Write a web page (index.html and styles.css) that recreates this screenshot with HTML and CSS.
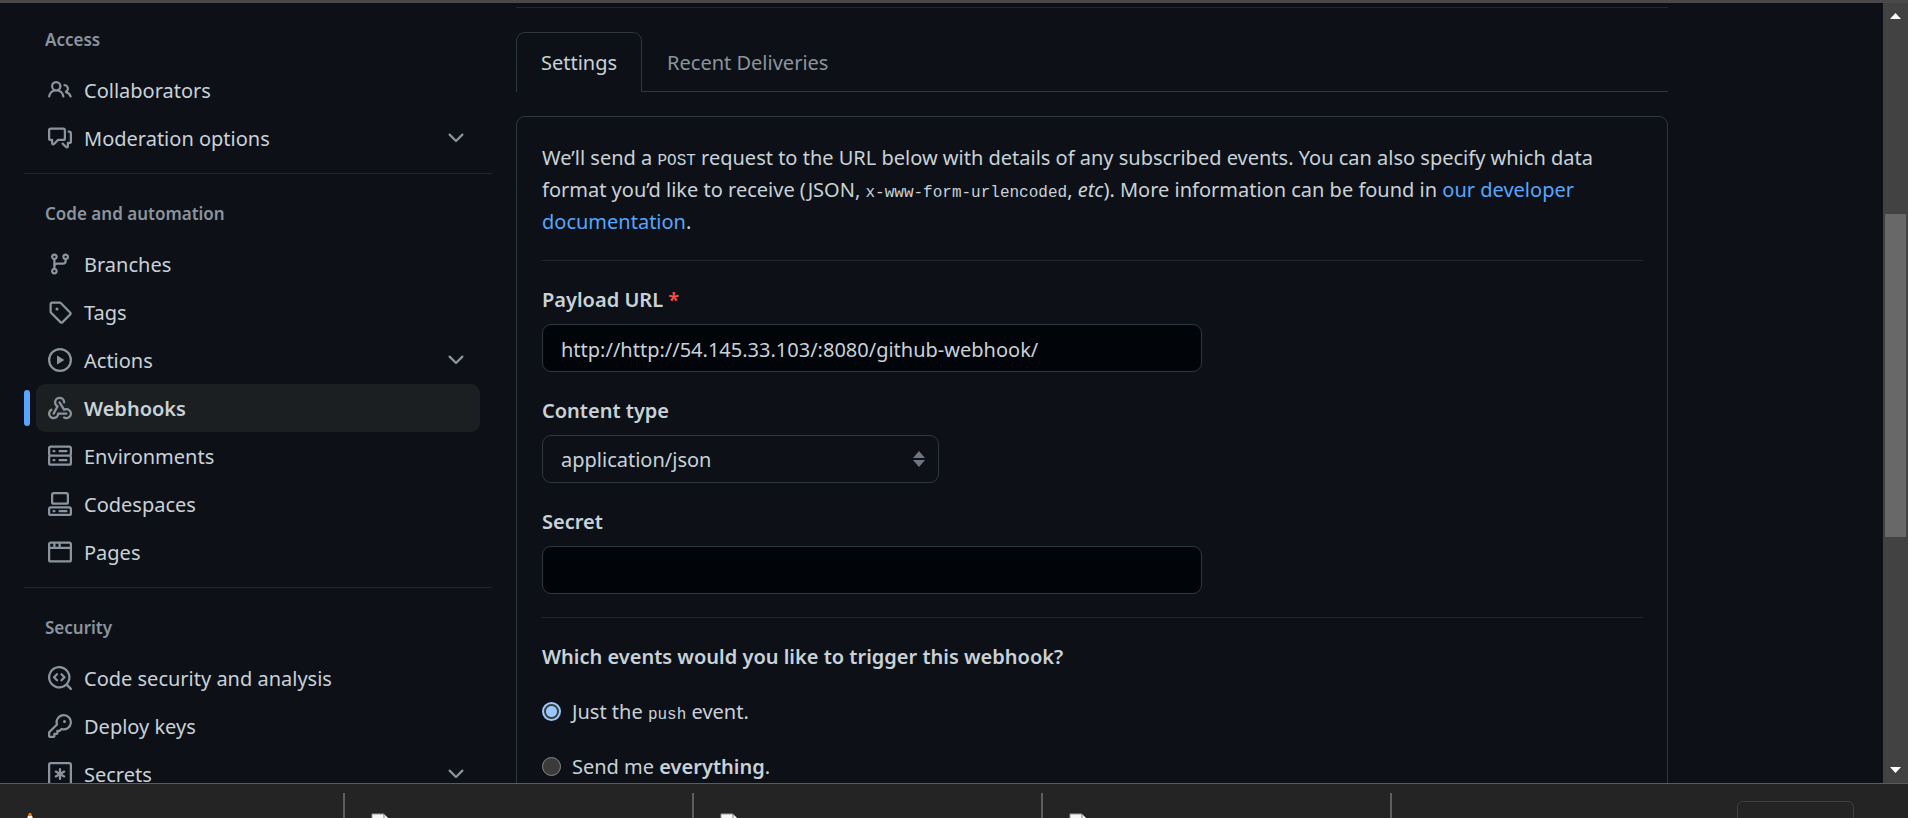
FILE: index.html
```html
<!DOCTYPE html>
<html lang="en">
<head>
<meta charset="utf-8">
<title>Webhook settings</title>
<link rel="stylesheet" href="styles.css">
</head>
<body>
<div class="viewport">
  <div class="page">
    <nav class="sidebar" aria-label="Repository settings">
      <section class="group">
        <h2 class="group-title">Access</h2>
        <ul class="nav-list">
          <li><a class="nav-item" href="#">
            <svg class="icon" viewBox="0 0 16 16"><path d="M2 5.5a3.5 3.5 0 1 1 5.898 2.549 5.508 5.508 0 0 1 3.034 4.084.75.75 0 1 1-1.482.235 4 4 0 0 0-7.9 0 .75.75 0 0 1-1.482-.236A5.507 5.507 0 0 1 3.102 8.05 3.493 3.493 0 0 1 2 5.5ZM11 4a3.001 3.001 0 0 1 2.22 5.018 5.01 5.01 0 0 1 2.56 3.012.749.749 0 0 1-.885.954.752.752 0 0 1-.549-.514 3.507 3.507 0 0 0-2.522-2.372.75.75 0 0 1-.574-.73v-.352a.75.75 0 0 1 .416-.672A1.5 1.5 0 0 0 11 5.5.75.75 0 0 1 11 4Zm-5.5-.5a2 2 0 1 0-.001 3.999A2 2 0 0 0 5.5 3.5Z"/></svg>
            <span class="nav-label">Collaborators</span></a></li>
          <li><button class="nav-item" type="button" aria-expanded="false">
            <svg class="icon" viewBox="0 0 16 16"><path d="M1.75 1h8.5c.966 0 1.75.784 1.75 1.75v5.5A1.75 1.75 0 0 1 10.25 10H7.061l-2.574 2.573A1.458 1.458 0 0 1 2 11.543V10h-.25A1.75 1.75 0 0 1 0 8.25v-5.5C0 1.784.784 1 1.75 1ZM1.5 2.75v5.5c0 .138.112.25.25.25h1a.75.75 0 0 1 .75.75v2.19l2.72-2.72a.749.749 0 0 1 .53-.22h3.5a.25.25 0 0 0 .25-.25v-5.5a.25.25 0 0 0-.25-.25h-8.5a.25.25 0 0 0-.25.25Zm13 2a.25.25 0 0 0-.25-.25h-.5a.75.75 0 0 1 0-1.5h.5c.966 0 1.75.784 1.75 1.75v5.5A1.75 1.75 0 0 1 14.25 12H14v1.543a1.458 1.458 0 0 1-2.487 1.03L9.22 12.28a.749.749 0 1 1 1.06-1.06l2.22 2.22v-2.19a.75.75 0 0 1 .75-.75h1a.25.25 0 0 0 .25-.25Z"/></svg>
            <span class="nav-label">Moderation options</span>
            <svg class="icon" viewBox="0 0 16 16"><path d="M12.78 5.22a.749.749 0 0 1 0 1.06l-4.25 4.25a.749.749 0 0 1-1.06 0L3.22 6.28a.749.749 0 1 1 1.06-1.06L8 8.939l3.72-3.719a.749.749 0 0 1 1.06 0Z"/></svg></button></li>
        </ul>
      </section>
      <section class="group">
        <h2 class="group-title">Code and automation</h2>
        <ul class="nav-list">
          <li><a class="nav-item" href="#">
            <svg class="icon" viewBox="0 0 16 16"><path d="M9.5 3.25a2.25 2.25 0 1 1 3 2.122V6A2.5 2.5 0 0 1 10 8.5H6a1 1 0 0 0-1 1v1.128a2.251 2.251 0 1 1-1.5 0V5.372a2.25 2.25 0 1 1 1.5 0v1.836A2.493 2.493 0 0 1 6 7h4a1 1 0 0 0 1-1v-.628A2.25 2.25 0 0 1 9.5 3.25Zm-6 0a.75.75 0 1 0 1.5 0 .75.75 0 0 0-1.5 0Zm8.25-.75a.75.75 0 1 0 0 1.5.75.75 0 0 0 0-1.5ZM4.25 12a.75.75 0 1 0 0 1.5.75.75 0 0 0 0-1.5Z"/></svg>
            <span class="nav-label">Branches</span></a></li>
          <li><a class="nav-item" href="#">
            <svg class="icon" viewBox="0 0 16 16"><path d="M1 7.775V2.75C1 1.784 1.784 1 2.75 1h5.025c.464 0 .91.184 1.238.513l6.25 6.25a1.75 1.75 0 0 1 0 2.474l-5.026 5.026a1.75 1.75 0 0 1-2.474 0l-6.25-6.25A1.752 1.752 0 0 1 1 7.775Zm1.5 0c0 .066.026.13.073.177l6.25 6.25a.25.25 0 0 0 .354 0l5.025-5.025a.25.25 0 0 0 0-.354l-6.25-6.25a.25.25 0 0 0-.177-.073H2.75a.25.25 0 0 0-.25.25ZM6 5a1 1 0 1 1 0 2 1 1 0 0 1 0-2Z"/></svg>
            <span class="nav-label">Tags</span></a></li>
          <li><button class="nav-item" type="button" aria-expanded="false">
            <svg class="icon" viewBox="0 0 16 16"><path d="M8 0a8 8 0 1 1 0 16A8 8 0 0 1 8 0ZM1.5 8a6.5 6.5 0 1 0 13 0 6.5 6.5 0 0 0-13 0Zm4.879-2.773 4.264 2.559a.25.25 0 0 1 0 .428l-4.264 2.559A.25.25 0 0 1 6 10.559V5.442a.25.25 0 0 1 .379-.215Z"/></svg>
            <span class="nav-label">Actions</span>
            <svg class="icon" viewBox="0 0 16 16"><path d="M12.78 5.22a.749.749 0 0 1 0 1.06l-4.25 4.25a.749.749 0 0 1-1.06 0L3.22 6.28a.749.749 0 1 1 1.06-1.06L8 8.939l3.72-3.719a.749.749 0 0 1 1.06 0Z"/></svg></button></li>
          <li><a class="nav-item nav-item-current" href="#" aria-current="page">
            <svg class="icon" viewBox="0 0 16 16"><path d="M5.5 4.25a2.25 2.25 0 0 1 4.5 0 .75.75 0 0 0 1.5 0 3.75 3.75 0 1 0-6.14 2.889l-2.272 4.258a.75.75 0 0 0 1.324.706L7 7.25a.75.75 0 0 0-.309-1.015A2.25 2.25 0 0 1 5.5 4.25Z"/><path d="M7.364 3.607a.75.75 0 0 1 1.03.257l2.608 4.349a3.75 3.75 0 1 1-.628 6.785.75.75 0 0 1 .752-1.299 2.25 2.25 0 1 0-.033-3.88.75.75 0 0 1-1.03-.256L7.107 4.636a.75.75 0 0 1 .257-1.03Z"/><path d="M2.9 8.776A.75.75 0 0 1 2.625 9.8 2.25 2.25 0 1 0 6 11.75a.75.75 0 0 1 .75-.751h5.5a.75.75 0 0 1 0 1.5H7.425a3.751 3.751 0 1 1-5.55-3.998.75.75 0 0 1 1.024.274Z"/></svg>
            <span class="nav-label">Webhooks</span></a></li>
          <li><a class="nav-item" href="#">
            <svg class="icon" viewBox="0 0 16 16"><path d="M1.75 1h12.5c.966 0 1.75.784 1.75 1.75v4c0 .372-.116.717-.314 1 .198.283.314.628.314 1v4a1.75 1.75 0 0 1-1.75 1.75H1.75A1.75 1.75 0 0 1 0 12.75v-4c0-.358.109-.707.314-1a1.739 1.739 0 0 1-.314-1v-4C0 1.784.784 1 1.75 1ZM1.5 2.75v4c0 .138.112.25.25.25h12.5a.25.25 0 0 0 .25-.25v-4a.25.25 0 0 0-.25-.25H1.75a.25.25 0 0 0-.25.25Zm.25 5.75a.25.25 0 0 0-.25.25v4c0 .138.112.25.25.25h12.5a.25.25 0 0 0 .25-.25v-4a.25.25 0 0 0-.25-.25ZM7 4.75A.75.75 0 0 1 7.75 4h4.5a.75.75 0 0 1 0 1.5h-4.5A.75.75 0 0 1 7 4.75ZM7.75 10h4.5a.75.75 0 0 1 0 1.5h-4.5a.75.75 0 0 1 0-1.5ZM3 4.75A.75.75 0 0 1 3.75 4h.5a.75.75 0 0 1 0 1.5h-.5A.75.75 0 0 1 3 4.75ZM3.75 10h.5a.75.75 0 0 1 0 1.5h-.5a.75.75 0 0 1 0-1.5Z"/></svg>
            <span class="nav-label">Environments</span></a></li>
          <li><a class="nav-item" href="#">
            <svg class="icon" viewBox="0 0 16 16"><path d="M0 11.25c0-.966.784-1.75 1.75-1.75h12.5c.966 0 1.75.784 1.75 1.75v3A1.75 1.75 0 0 1 14.25 16H1.75A1.75 1.75 0 0 1 0 14.25Zm2-9.5C2 .784 2.784 0 3.75 0h8.5C13.216 0 14 .784 14 1.75v5a1.75 1.75 0 0 1-1.75 1.75h-8.5A1.75 1.75 0 0 1 2 6.75Zm1.75-.25a.25.25 0 0 0-.25.25v5c0 .138.112.25.25.25h8.5a.25.25 0 0 0 .25-.25v-5a.25.25 0 0 0-.25-.25Zm-2 9.5a.25.25 0 0 0-.25.25v3c0 .138.112.25.25.25h12.5a.25.25 0 0 0 .25-.25v-3a.25.25 0 0 0-.25-.25ZM7 12.75a.75.75 0 0 1 .75-.75h4.5a.75.75 0 0 1 0 1.5h-4.5a.75.75 0 0 1-.75-.75Zm-4 0a.75.75 0 0 1 .75-.75h.5a.75.75 0 0 1 0 1.5h-.5a.75.75 0 0 1-.75-.75Z"/></svg>
            <span class="nav-label">Codespaces</span></a></li>
          <li><a class="nav-item" href="#">
            <svg class="icon" viewBox="0 0 16 16"><path d="M0 2.75C0 1.784.784 1 1.75 1h12.5c.966 0 1.75.784 1.75 1.75v10.5A1.75 1.75 0 0 1 14.25 15H1.75A1.75 1.75 0 0 1 0 13.25ZM14.5 6h-13v7.25c0 .138.112.25.25.25h12.5a.25.25 0 0 0 .25-.25Zm-6-3.5v2h6V2.75a.25.25 0 0 0-.25-.25ZM5 2.5v2h2v-2Zm-3.25 0a.25.25 0 0 0-.25.25V4.5h2v-2Z"/></svg>
            <span class="nav-label">Pages</span></a></li>
        </ul>
      </section>
      <section class="group">
        <h2 class="group-title">Security</h2>
        <ul class="nav-list">
          <li><a class="nav-item" href="#">
            <svg class="icon" viewBox="0 0 16 16"><path d="M8.47 4.97a.75.75 0 0 0 0 1.06L9.94 7.5 8.47 8.97a.75.75 0 1 0 1.06 1.06l2-2a.75.75 0 0 0 0-1.06l-2-2a.75.75 0 0 0-1.06 0ZM6.53 6.03a.75.75 0 0 0-1.06-1.06l-2 2a.75.75 0 0 0 0 1.06l2 2a.75.75 0 1 0 1.06-1.06L5.06 7.5l1.47-1.47Z"/><path d="M12.246 13.307a7.501 7.501 0 1 1 1.06-1.06l2.474 2.473a.749.749 0 1 1-1.06 1.06ZM1.5 7.5a6.002 6.002 0 0 0 3.608 5.504 6.002 6.002 0 0 0 6.486-1.117.748.748 0 0 1 .292-.293A6 6 0 1 0 1.5 7.5Z"/></svg>
            <span class="nav-label">Code security and analysis</span></a></li>
          <li><a class="nav-item" href="#">
            <svg class="icon" viewBox="0 0 16 16"><path d="M10.5 0a5.499 5.499 0 1 1-1.288 10.848l-.932.932a.749.749 0 0 1-.53.22H7v.75a.749.749 0 0 1-.22.53l-.5.5a.749.749 0 0 1-.53.22H5v.75a.749.749 0 0 1-.22.53l-.5.5a.749.749 0 0 1-.53.22h-2A1.75 1.75 0 0 1 0 14.25v-2c0-.199.079-.389.22-.53l4.932-4.932A5.5 5.5 0 0 1 10.5 0Zm-4 5.5c-.001.431.069.86.205 1.269a.75.75 0 0 1-.181.768L1.5 12.56v1.69c0 .138.112.25.25.25h1.69l.06-.06v-1.19a.75.75 0 0 1 .75-.75h1.19l.06-.06v-1.19a.75.75 0 0 1 .75-.75h1.19l1.023-1.025a.75.75 0 0 1 .768-.18A4 4 0 1 0 6.5 5.5ZM11 6a1 1 0 1 1 0-2 1 1 0 0 1 0 2Z"/></svg>
            <span class="nav-label">Deploy keys</span></a></li>
          <li><button class="nav-item" type="button" aria-expanded="false">
            <svg class="icon" viewBox="0 0 16 16"><path d="M0 1.75C0 .784.784 0 1.750 0h12.5C15.216 0 16 .784 16 1.750v12.5A1.75 1.75 0 0 1 14.250 16H1.750A1.75 1.75 0 0 1 0 14.250ZM1.750 1.500a.25.25 0 0 0-.25.25v12.5c0 .138.112.25.25.25h12.5a.25.25 0 0 0 .25-.25V1.750a.25.25 0 0 0-.25-.25Z"/><path d="M8 4a.75.75 0 0 1 .75.75V6.7l1.69-.975a.75.75 0 0 1 .75 1.3L9.5 8l1.69.976a.75.75 0 0 1-.75 1.298L8.75 9.3v1.951a.75.75 0 0 1-1.5 0V9.299l-1.69.976a.75.75 0 0 1-.75-1.3L6.5 8l-1.69-.975a.75.75 0 0 1 .75-1.3l1.69.976V4.75A.75.75 0 0 1 8 4Z"/></svg>
            <span class="nav-label">Secrets</span>
            <svg class="icon" viewBox="0 0 16 16"><path d="M12.78 5.22a.749.749 0 0 1 0 1.06l-4.25 4.25a.749.749 0 0 1-1.06 0L3.22 6.28a.749.749 0 1 1 1.06-1.06L8 8.939l3.72-3.719a.749.749 0 0 1 1.06 0Z"/></svg></button></li>
        </ul>
      </section>
    </nav>

    <main class="content">
      <nav class="tabs" aria-label="Webhook">
        <a class="tab tab-current" href="#" aria-current="page">Settings</a>
        <a class="tab" href="#">Recent Deliveries</a>
      </nav>
      <form class="panel">
        <p class="intro">We’ll send a <code>POST</code> request to the URL below with details of any subscribed events. You can also specify which data format you’d like to receive (JSON, <code>x-www-form-urlencoded</code>, <em>etc</em>). More information can be found in <a class="link" href="#">our developer documentation</a>.</p>
        <div class="fields">
          <div class="field">
            <label class="field-label" for="payload">Payload URL <span class="required">*</span></label>
            <input class="control" id="payload" type="text" value="http://http://54.145.33.103/:8080/github-webhook/">
          </div>
          <div class="field">
            <label class="field-label" for="content-type">Content type</label>
            <div class="select-wrap">
              <select class="control control-select" id="content-type"><option>application/json</option></select>
              <svg class="select-arrows" viewBox="0 0 12 16"><path d="M0 7 6 0l6 7ZM0 9h12l-6 7Z"/></svg>
            </div>
          </div>
          <div class="field">
            <label class="field-label" for="secret">Secret</label>
            <input class="control" id="secret" type="text">
          </div>
        </div>
        <fieldset class="events">
          <legend class="field-label">Which events would you like to trigger this webhook?</legend>
          <label class="choice"><input class="radio" type="radio" name="events" checked><span class="choice-text">Just the <code>push</code> event.</span></label>
          <label class="choice"><input class="radio" type="radio" name="events"><span class="choice-text">Send me <strong>everything</strong>.</span></label>
        </fieldset>
      </form>
    </main>
  </div>
  <div class="scrollbar" aria-hidden="true">
    <svg class="scroll-arrow" viewBox="0 0 11 6"><path d="M0 6 5.500 0 11 6Z"/></svg>
    <div class="scroll-track"><div class="scroll-thumb"></div></div>
    <svg class="scroll-arrow" viewBox="0 0 11 6"><path d="M0 0h11L5.500 6Z"/></svg>
  </div>
</div>
<footer class="downloads">
  <div class="download"><svg class="cone" viewBox="0 0 24 24"><path fill="#f57c00" d="M11 0h2l8 20H3Z"/><path fill="#eee" d="M10 3h4l1 4H9Z"/></svg></div>
  <div class="download"><svg class="file" viewBox="0 0 18 24"><path fill="#f5f5f5" stroke="#9a9a9a" d="M0 0h12l5 5v19H0Z"/><path fill="none" stroke="#777" d="M12 0v5h5"/></svg></div>
  <div class="download"><svg class="file" viewBox="0 0 18 24"><path fill="#f5f5f5" stroke="#9a9a9a" d="M0 0h12l5 5v19H0Z"/><path fill="none" stroke="#777" d="M12 0v5h5"/></svg></div>
  <div class="download"><svg class="file" viewBox="0 0 18 24"><path fill="#f5f5f5" stroke="#9a9a9a" d="M0 0h12l5 5v19H0Z"/><path fill="none" stroke="#777" d="M12 0v5h5"/></svg></div>
  <button class="show-all" type="button">Show all</button>
</footer>
</body>
</html>
```
FILE: styles.css
```css
* { box-sizing: border-box; }

body {
  margin: 0;
  height: 100vh;
  display: flex;
  flex-direction: column;
  overflow: hidden;
  background: #0d1117;
  color: #c9d1d9;
  font: 20px/32px "Noto Sans", "Open Sans", sans-serif;
  border-top: 3px solid #4a484a;
}

a { color: inherit; text-decoration: none; }
button, input, select { font: inherit; color: inherit; }
code { font: 16px/20px "Liberation Mono", monospace; }
strong { font-weight: 600; }

.viewport { flex: 1; min-height: 0; display: flex; }
.page { flex: 1; min-width: 0; display: flex; gap: 24px; padding: 0 24px; overflow: hidden; }

/* Sidebar */
.sidebar { flex: 0 0 468px; padding-top: 9px; }
.group + .group { margin-top: 11px; padding-top: 12px; border-top: 1px solid #21262d; }
.group-title {
  margin: 0;
  padding: 2px 21px 0;
  font-size: 17px;
  line-height: 52px;
  font-weight: 600;
  color: #8b949e;
}
.nav-list { list-style: none; margin: 0; padding: 0 12px; }
.nav-item {
  position: relative;
  display: flex;
  align-items: center;
  gap: 12px;
  width: 100%;
  height: 48px;
  padding: 0 12px;
  border: 0;
  border-radius: 9px;
  background: none;
  text-align: left;
}
.nav-label { flex: 1; padding-top: 2px; }
.nav-item-current { background: #1b1f22; font-weight: 600; }
.nav-item-current::before {
  content: "";
  position: absolute;
  left: -12px;
  width: 6px;
  height: 36px;
  border-radius: 6px;
  background: #58a6ff;
}
.icon { width: 24px; height: 24px; fill: #8b949e; }

/* Content */
.content { flex: 1; min-width: 0; max-width: 1152px; padding-top: 4px; }
.tabs {
  display: flex;
  padding-top: 24px;
  border-top: 1px solid #21262d;
  box-shadow: inset 0 -1px #30363d;
}
.tab { padding: 14px 25px; line-height: 31px; color: #8b949e; border-top: 1px solid transparent; }
.tab-current {
  padding: 14px 24px;
  border: 1px solid #30363d;
  border-bottom: 0;
  border-radius: 9px 9px 0 0;
  background: #0d1117;
  color: #c9d1d9;
}
.panel {
  margin-top: 24px;
  padding: 25px 24px 24px 25px;
  border: 1px solid #30363d;
  border-bottom: 0;
  border-radius: 9px 9px 0 0;
}
.intro { margin: 0; padding-bottom: 22px; border-bottom: 1px solid #21262d; }
.link { color: #58a6ff; }
.fields { display: flex; flex-direction: column; gap: 22px; padding: 23px 0; border-bottom: 1px solid #21262d; }
.field { display: flex; flex-direction: column; align-items: flex-start; gap: 8px; }
.field + .field { padding-top: 1px; }
.field-label { padding: 0; font-weight: 600; }
.required { color: #f85149; }
.control {
  width: 660px;
  max-width: 100%;
  height: 48px;
  padding: 2px 18px 0;
  border: 1px solid #30363d;
  border-radius: 9px;
  background: #010409;
}
.select-wrap { position: relative; width: 397px; }
.control-select { width: 100%; appearance: none; background: #0d1117; }
.select-arrows {
  position: absolute;
  right: 14px;
  top: 16px;
  width: 12px;
  height: 16px;
  fill: #6e7681;
  pointer-events: none;
}
.events { display: flex; flex-direction: column; gap: 21px; margin: 0; padding: 23px 0 0; border: 0; }
.events .field-label { float: left; }
.choice { display: flex; align-items: center; gap: 11px; }
.choice-text { padding-top: 2px; }
.radio {
  appearance: none;
  width: 19px;
  height: 19px;
  margin: 0;
  border: 1px solid #858585;
  border-radius: 50%;
  background: #3b3b3b;
}
.radio:checked { border: 2px solid #99c8ff; background: radial-gradient(#99c8ff 5px, #3b3b3b 6px); }

/* Window scrollbar */
.scrollbar {
  flex: 0 0 25px;
  display: flex;
  flex-direction: column;
  align-items: center;
  padding: 10px 2px;
  background: #424242;
}
.scroll-arrow { width: 11px; height: 6px; fill: #fff; }
.scroll-track { flex: 1; align-self: stretch; padding: 195px 0 230px; }
.scroll-thumb { height: 100%; background: #686868; }

/* Download shelf */
.downloads {
  flex: 0 0 35px;
  display: flex;
  padding-top: 9px;
  border-top: 1px solid #5b5b5b;
  background: #242424;
  overflow: hidden;
}
.download { flex: 0 1 349px; padding: 21px 27px; border-right: 2px solid #5e5e5e; }
.download:first-child { flex-basis: 345px; padding: 20px 18px; }
.file { display: block; width: 18px; height: 24px; overflow: visible; }
.cone { display: block; width: 24px; height: 24px; }
.show-all {
  margin: 8px 54px 0 auto;
  width: 117px;
  height: 46px;
  border: 1px solid #3f4042;
  border-radius: 6px;
  background: none;
  color: #8ab4f8;
  font-size: 17px;
}
```
